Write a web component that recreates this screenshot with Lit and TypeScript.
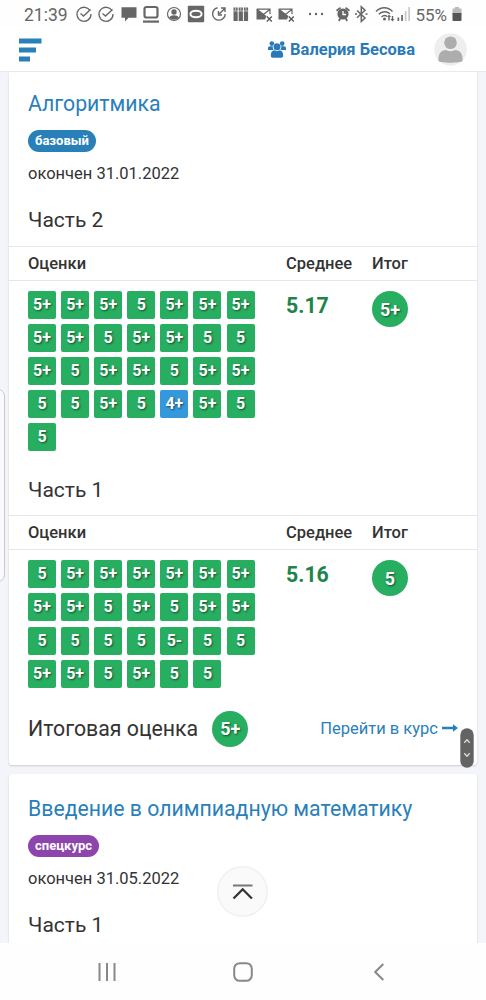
import { LitElement, html, css, svg } from 'lit'

const checkIcon = svg`<path d="M15.2 6A7 7 0 1 0 16 9M5.500 8.500l3 2.600 7-6.500" fill="none" stroke="#666" stroke-width="1.300"/>`
const pictureIcon = svg`
  <path d="M1.800 4.200H15v5M1.800 4.200 8.500 9.500 15 4.200" fill="none" stroke="#666" stroke-width="1.200"/>
  <path d="M1.500 4v10.500H10L11.500 11z" fill="#666"/>
  <path d="m11.800 11.500 5 5m0-5-5 5" stroke="#555" stroke-width="1.300"/>`

const statusIcons = [
  checkIcon,
  checkIcon,
  svg`<path d="M1.500 2.200h15v10.500H8.500L5 16.500v-3.800H1.500z" fill="#666"/>`,
  svg`<rect x="2.500" y="2" width="13" height="10.500" rx="2" fill="none" stroke="#666" stroke-width="2.200"/><path d="M1 15.500h16v2.200H1z" fill="#666"/>`,
  svg`<circle cx="9" cy="9" r="6.500" fill="none" stroke="#666" stroke-width="1.200"/><circle cx="9" cy="7" r="2.700" fill="#666"/><path d="M4.200 12.500c1.600-3 8-3 9.600 0-2.300 3-7.300 3-9.600 0z" fill="#666"/>`,
  svg`<rect x=".8" y=".8" width="16.400" height="16.400" rx="1" fill="#666"/><ellipse cx="9" cy="9" rx="5.600" ry="3.200" fill="none" stroke="#fff" stroke-width="2"/>`,
  svg`<path d="M7.500 2.700a6.300 6.300 0 1 0 7.700 6.300M8.500 6v4h3.500M9.500 8.800l5-5M11 3h4v4" fill="none" stroke="#666" stroke-width="1.400"/>`,
  svg`<path d="M1.500 2.500h4.200V16H1.500zM6.700 2.500h4.200V16H6.700zM11.900 2.500h4.200V16h-4.200z" fill="#666"/><path d="M1.500 6h15M3.600 2.500v3M8.800 2.500v3M14 2.500v3" stroke="#fff" stroke-width=".6"/>`,
  pictureIcon,
  pictureIcon,
]

export class GradeBadge extends LitElement {
  static styles = css`
    :host { display: block; }
    .grade {
      display: flex;
      align-items: center;
      justify-content: center;
      width: 28px;
      height: 28px;
      border-radius: 2px;
      background: #27ae60;
      color: #fff;
      font-size: 16px;
      font-weight: 700;
      line-height: 1;
      text-shadow: 1px 1px 2px rgba(0, 0, 0, 0.55);
    }
    .grade.blue { background: #3498db; }
    .grade.round {
      width: 36px;
      height: 36px;
      border-radius: 50%;
      font-size: 18px;
      padding-top: 1px;
      box-sizing: border-box;
    }
  `

  static properties = {
    value: { type: String },
    round: { type: Boolean },
  }

  declare value: string
  declare round: boolean

  constructor() {
    super()
    this.value = ''
    this.round = false
  }

  render() {
    const color = this.value.startsWith('4') ? 'blue' : ''
    return html`<div class="grade ${color} ${this.round ? 'round' : ''}">${this.value}</div>`
  }
}

customElements.define('grade-badge', GradeBadge)

interface Part {
  title: string
  marks: string
  average: string
  total: string
}

const parts: Part[] = [
  {
    title: 'Часть 2',
    marks: '5+ 5+ 5+ 5 5+ 5+ 5+ 5+ 5+ 5 5+ 5+ 5 5 5+ 5 5+ 5+ 5 5+ 5+ 5 5 5+ 5 4+ 5+ 5 5',
    average: '5.17',
    total: '5+',
  },
  {
    title: 'Часть 1',
    marks: '5 5+ 5+ 5+ 5+ 5+ 5+ 5+ 5+ 5 5+ 5 5+ 5+ 5 5 5 5 5- 5 5 5+ 5+ 5 5+ 5 5',
    average: '5.16',
    total: '5',
  },
]

export class AppRoot extends LitElement {
  static styles = css`
    :host {
      display: flex;
      flex-direction: column;
      position: relative;
      width: 486px;
      height: 1000px;
      overflow: hidden;
      background: #f4f5fa;
      color: #333;
      font-family: Roboto, 'Liberation Sans', sans-serif;
    }
    * { box-sizing: border-box; }
    svg { display: block; flex: none; }

    .status {
      display: flex;
      align-items: center;
      flex: none;
      height: 28px;
      padding-left: 24px;
      background: #fefefe;
      color: #666;
      font-size: 17.5px;
    }
    .time { width: 50.5px; padding-top: 1px; white-space: nowrap; }
    .notifications { display: flex; gap: 4.5px; width: 234px; }
    .system { display: flex; align-items: center; }
    .percent { width: 36px; padding-top: 1px; white-space: nowrap; font-size: 17px; }

    .topbar {
      display: flex;
      align-items: center;
      flex: none;
      height: 44px;
      padding: 0 19px;
      background: #fff;
      border-bottom: 1px solid #e9eaee;
    }
    .user {
      display: flex;
      align-items: center;
      gap: 4px;
      margin-left: auto;
      color: #2a7ab8;
      font-size: 16.5px;
      font-weight: 700;
      white-space: nowrap;
    }
    .avatar { margin-left: 19px; }

    .content {
      display: flex;
      flex-direction: column;
      gap: 9px;
      flex: none;
      height: 871px;
      padding: 0 9px;
      overflow: hidden;
    }
    .card {
      flex: none;
      background: #fff;
      border-radius: 3px;
      box-shadow: 0 1px 2px rgba(40, 40, 70, 0.2);
    }
    .card.first { height: 693px; border-radius: 0 0 3px 3px; }
    .card.next { height: 300px; }
    .intro { height: 112px; padding: 17px 19px 0; }
    .next .intro { height: 114px; padding-top: 20px; }
    .title {
      height: 28px;
      color: #2a7fba;
      font-size: 21.25px;
      line-height: 29px;
      white-space: nowrap;
    }
    .tag {
      display: block;
      width: fit-content;
      height: 22px;
      margin-top: 13px;
      padding: 0 7px;
      border-radius: 11px;
      background: #2980b9;
      color: #fff;
      font-size: 13px;
      font-weight: 700;
      line-height: 21px;
    }
    .tag.special { background: #8e44ad; }
    .date {
      margin-top: 12px;
      font-size: 16.5px;
      line-height: 20px;
    }
    .part-title {
      height: 62px;
      padding: 23px 19px 0;
      font-size: 21px;
      line-height: 26px;
    }
    .next .part-title { padding-top: 24px; }
    .part + .part .part-title { height: 64px; padding-top: 25.5px; }
    .row {
      display: grid;
      grid-template-columns: 258px 86px 1fr;
      padding-left: 19px;
    }
    .head {
      height: 35px;
      border-top: 1px solid #e4e7ed;
      border-bottom: 1px solid #e4e7ed;
      font-size: 16.5px;
      font-weight: 500;
      line-height: 33px;
    }
    .body { padding-top: 10px; }
    .marks {
      display: grid;
      grid-template-columns: repeat(7, 28px);
      gap: 5.1px;
    }
    .average {
      color: #1e8449;
      font-size: 21.3px;
      font-weight: 700;
      line-height: 29px;
    }
    .summary {
      display: flex;
      align-items: center;
      height: 36px;
      margin-top: 23px;
      padding: 0 19px;
      font-size: 21.3px;
    }
    .summary span { padding-bottom: 1px; }
    .summary grade-badge { margin-left: 14px; }
    .link {
      display: flex;
      align-items: center;
      gap: 4px;
      margin-left: auto;
      color: #2a7fba;
      font-size: 16.5px;
    }

    .navbar {
      display: grid;
      grid-template-columns: repeat(3, 136px);
      place-items: center;
      justify-content: center;
      flex: 1;
      background: #fefefe;
    }

    .edge-panel {
      position: absolute;
      left: -10px;
      top: 389px;
      width: 15px;
      height: 193px;
      border: 1px solid #c8c9ce;
      border-radius: 7px;
      background: #fafafc;
    }
    .scroll-handle { position: absolute; left: 460px; top: 728px; }
    .to-top { position: absolute; left: 217px; top: 866px; }
  `

  renderStatus() {
    return html`
      <div class="status">
        <span class="time">21:39</span>
        <div class="notifications">
          ${statusIcons.map((icon) => html`<svg width="18" height="18" viewBox="0 0 18 18">${icon}</svg>`)}
        </div>
        <div class="system">
          <svg width="107" height="18" viewBox="308.5 0 107 18">
            <g fill="#666">
              <circle cx="309.5" cy="9" r="1.2" /><circle cx="315.5" cy="9" r="1.2" /><circle cx="321.5" cy="9" r="1.2" />
              <circle cx="342.5" cy="9" r="5.6" />
              <path d="m335.500 5 4-3 1 1.500-4 3zM349.500 5l-4-3-1 1.500 4 3zM337.500 15.500l1.500-2.500 1.500 1-1.500 2.500zM347.500 15.500 346 13l-1.500 1 1.500 2.500z" />
              <path d="M397 12.500h1.700v3.500H397zM400.700 10h1.700v6h-1.700z" />
              <path d="M404.300 6h1.700v10h-1.700zM407.800 2h1.700v14h-1.700z" opacity=".35" />
              <path d="m386.500 12 2-2.500 2 2.500h-1.300v3.500h-1.400V12zM390 14l2 2.500 2-2.500h-1.300v-3h-1.400v3z" />
              <circle cx="384" cy="14" r="1.5" />
            </g>
            <path d="M342.500 6v3.500h3" fill="none" stroke="#fff" stroke-width="1.3" />
            <g fill="none" stroke="#666" stroke-width="1.5">
              <path d="m356.500 5.500 8 7.500-3.700 3.500V1.700l3.700 3.500-8 7.500M354.500 9h2M365 9h2" />
              <path d="M375.500 6.500c4.500-5 12-5 16.500 0M378.200 9.300c3.200-3.300 8.200-3.300 11.200-.5M381 12c1.700-1.700 3.800-1.800 5.500-.6" stroke-width="1.3" />
            </g>
          </svg>
          <span class="percent">55%</span>
          <svg width="10" height="18" viewBox="0 0 10 18">
            <path d="M3 2h4v1.500h2.500v6H.5v-6H3z" fill="#bbb" />
            <path d="M.5 8h9v7a1 1 0 0 1-1 1h-7a1 1 0 0 1-1-1z" fill="#555" />
          </svg>
        </div>
      </div>
    `
  }

  renderTopbar() {
    return html`
      <div class="topbar">
        <svg width="23" height="24" viewBox="0 0 23 24">
          <path d="M0 .5h22.500v5H0zM0 9.500h17v5H0zM0 18.500h11v5H0z" fill="#2980b9" />
        </svg>
        <div class="user">
          <svg width="18" height="18" viewBox="0 0 18 18" fill="#2a7ab8">
            <circle cx="3.8" cy="2.6" r="2.3" /><circle cx="14.2" cy="2.6" r="2.3" />
            <circle cx="9" cy="5.8" r="3.5" />
            <path d="M0 9V7.500C0 6 .8 5.200 2 5.200h2.800c-.2 1.700.2 2.900 1 3.900H0zM18 9V7.500c0-1.500-.8-2.300-2-2.300h-2.800c.2 1.700-.2 2.900-1 3.900H18z" />
            <path d="M2.800 14.500c0-3 1.200-5.200 3.700-5.200 1.600 1.100 3.400 1.100 5 0 2.500 0 3.700 2.200 3.700 5.200 0 1.600-.8 2.200-2 2.200H4.800c-1.200 0-2-.6-2-2.200z" />
          </svg>
          <span>Валерия Бесова</span>
        </div>
        <svg class="avatar" width="33" height="33" viewBox="0 0 33 33">
          <circle cx="16.5" cy="16.5" r="16.3" fill="#eee" />
          <circle cx="16.5" cy="9.8" r="6.3" fill="#adadad" />
          <path d="M4.500 28c-.5-7 2-10.500 7.500-11 3 1.700 6 1.700 9 0 5.500.5 8 4 7.500 11-2 2-21 2.500-24 0z" fill="#adadad" />
        </svg>
      </div>
    `
  }

  renderPart(part: Part) {
    return html`
      <div class="part">
        <div class="part-title">${part.title}</div>
        <div class="row head"><span>Оценки</span><span>Среднее</span><span>Итог</span></div>
        <div class="row body">
          <div class="marks">
            ${part.marks.split(' ').map((mark) => html`<grade-badge value=${mark}></grade-badge>`)}
          </div>
          <span class="average">${part.average}</span>
          <grade-badge round value=${part.total}></grade-badge>
        </div>
      </div>
    `
  }

  render() {
    return html`
      ${this.renderStatus()} ${this.renderTopbar()}
      <div class="content">
        <div class="card first">
          <div class="intro">
            <div class="title">Алгоритмика</div>
            <span class="tag">базовый</span>
            <div class="date">окончен 31.01.2022</div>
          </div>
          ${parts.map((part) => this.renderPart(part))}
          <div class="summary">
            <span>Итоговая оценка</span>
            <grade-badge round value="5+"></grade-badge>
            <span class="link">
              Перейти в курс
              <svg width="16" height="10" viewBox="0 0 16 10" fill="#2980b9">
                <path d="M0 3.800h11V1.200L16 5l-5 3.800V6.200H0z" />
              </svg>
            </span>
          </div>
        </div>
        <div class="card next">
          <div class="intro">
            <div class="title">Введение в олимпиадную математику</div>
            <span class="tag special">спецкурс</span>
            <div class="date">окончен 31.05.2022</div>
          </div>
          <div class="part-title">Часть 1</div>
        </div>
      </div>
      <div class="navbar">
        <svg width="18" height="18" viewBox="0 0 18 18"><path d="M1.500 0v18M9 0v18M16.500 0v18" stroke="#888" stroke-width="2" /></svg>
        <svg width="20" height="20" viewBox="0 0 20 20"><rect x="1.2" y="1.2" width="17.6" height="17.6" rx="5.5" fill="none" stroke="#888" stroke-width="2" /></svg>
        <svg width="10" height="18" viewBox="0 0 10 18"><path d="M9.300 1 1.200 9l8.100 8" fill="none" stroke="#888" stroke-width="2" /></svg>
      </div>

      <div class="edge-panel"></div>
      <svg class="scroll-handle" width="14" height="40" viewBox="0 0 14 40">
        <rect x=".3" y=".3" width="13.4" height="39.4" rx="6.7" fill="#636363" />
        <path d="m4.300 14.800 2.700-3 2.700 3M4.300 25.200l2.700 3 2.700-3" fill="none" stroke="#ddd" stroke-width="1.3" />
      </svg>
      <svg class="to-top" width="51" height="51" viewBox="0 0 51 51">
        <circle cx="25.5" cy="25.5" r="24.7" fill="#fafafa" stroke="#f0f0f0" stroke-width="1.5" />
        <path d="M16 19.500h19.500" stroke="#777" stroke-width="2" />
        <path d="m16.500 32.500 9.200-9.200 9.200 9.200" fill="none" stroke="#333" stroke-width="2.3" />
      </svg>
    `
  }
}

customElements.define('app-root', AppRoot)

declare global {
  interface HTMLElementTagNameMap {
    'grade-badge': GradeBadge
    'app-root': AppRoot
  }
}
